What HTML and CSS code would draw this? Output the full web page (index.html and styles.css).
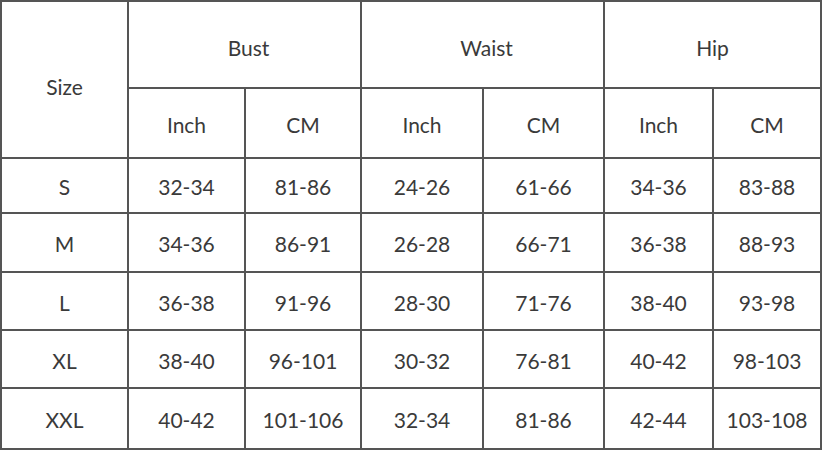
FILE: index.html
```html
<!DOCTYPE html>
<html>
<head>
<meta charset="utf-8">
<link rel="stylesheet" href="styles.css">
</head>
<body>
<div class="chart">
  <div class="cell size-head">Size</div>
  <div class="cell group shift">Bust</div>
  <div class="cell group shift">Waist</div>
  <div class="cell group">Hip</div>
  <div class="cell">Inch</div><div class="cell">CM</div>
  <div class="cell">Inch</div><div class="cell">CM</div>
  <div class="cell">Inch</div><div class="cell">CM</div>

  <div class="cell">S</div><div class="cell">32-34</div><div class="cell">81-86</div><div class="cell">24-26</div><div class="cell">61-66</div><div class="cell">34-36</div><div class="cell">83-88</div>
  <div class="cell">M</div><div class="cell">34-36</div><div class="cell">86-91</div><div class="cell">26-28</div><div class="cell">66-71</div><div class="cell">36-38</div><div class="cell">88-93</div>
  <div class="cell">L</div><div class="cell">36-38</div><div class="cell">91-96</div><div class="cell">28-30</div><div class="cell">71-76</div><div class="cell">38-40</div><div class="cell">93-98</div>
  <div class="cell">XL</div><div class="cell">38-40</div><div class="cell">96-101</div><div class="cell">30-32</div><div class="cell">76-81</div><div class="cell">40-42</div><div class="cell">98-103</div>
  <div class="cell">XXL</div><div class="cell">40-42</div><div class="cell">101-106</div><div class="cell">32-34</div><div class="cell">81-86</div><div class="cell">42-44</div><div class="cell">103-108</div>
</div>
</body>
</html>
```
FILE: styles.css
```css
html, body {
  margin: 0;
  padding: 0;
  background: #ffffff;
}
.chart {
  width: 822px;
  height: 450px;
  box-sizing: border-box;
  padding: 2px;
  background: #555555;
  display: grid;
  grid-template-columns: 125px 115px 114px 120px 119px 107px 106px;
  grid-template-rows: 85px 68px 53px 57px 56px 56px 59px;
  gap: 2px;
  font-family: Lato, "Open Sans", "Liberation Sans", sans-serif;
  font-size: 21px;
  color: #3a3a3a;
}
.cell {
  background: #ffffff;
  display: flex;
  align-items: center;
  justify-content: center;
  padding-top: 2px;
}
.size-head {
  grid-row: span 2;
  padding-top: 13px;
}
.group {
  grid-column: span 2;
  padding-top: 6px;
}
.shift {
  padding-left: 8px;
}
```
